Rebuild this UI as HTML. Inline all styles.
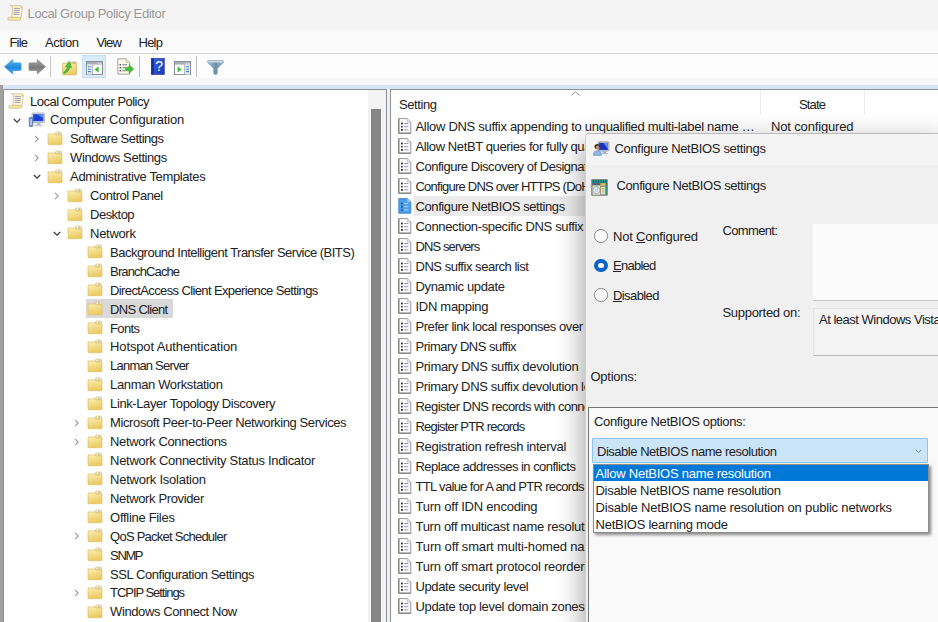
<!DOCTYPE html>
<html><head><meta charset="utf-8"><title>Local Group Policy Editor</title>
<style>
*{box-sizing:border-box}
html,body{margin:0;padding:0}
body{width:938px;height:622px;overflow:hidden;background:#fff;font-family:"Liberation Sans",sans-serif;font-size:13px;color:#222;position:relative;letter-spacing:-0.5px}
.abs{position:absolute}
.t{position:absolute;white-space:nowrap;line-height:16px;height:16px}
svg{overflow:visible}
#titlebar{left:0;top:0;width:938px;height:29px;background:#f4f4f4}
#menubar{left:0;top:29px;width:938px;height:24px;background:linear-gradient(#f6f6f6,#fbfbfb 5px)}
#menuline{left:0;top:53px;width:938px;height:1px;background:#cfcfcf}
#toolbar{left:0;top:54px;width:938px;height:24px;background:#fcfcfc}
#band1{left:0;top:78px;width:938px;height:7px;background:#f6f7f9}
#band2{left:0;top:85px;width:938px;height:4px;background:#d6e4f3}
#leftedge{left:0;top:85px;width:3px;height:537px;background:#a0a0a0}
#leftpane{left:3px;top:89px;width:384px;height:540px;background:#fff;border:1px solid #8a8f98;overflow:hidden}
#rightpane{left:390px;top:89px;width:560px;height:540px;background:#fff;border:1px solid #8a8f98;overflow:hidden}
#split{left:387px;top:89px;width:3px;height:533px;background:#f0f0f0}
.sel{background:#d9d9d9}
#dialog{left:584.5px;top:132.5px;width:360px;height:500px;background:#f0f0f0;border-top-left-radius:4px;border-left:1px solid #cfcfcf;border-top:1px solid #bcbcbc;box-shadow:0 10px 28px rgba(0,0,0,.42);overflow:hidden}
.d12{font-size:13px}
u{text-decoration-thickness:1px;text-underline-offset:1px}
.radio{width:13.5px;height:13.5px;border-radius:50%;border:1px solid #858585;background:#f9f9f9;margin-left:-0.6px !important}
.radio.on{border:4px solid #0a64c8;background:#fff}
.dd{letter-spacing:-0.18px}
#dialog > *{margin-left:-1px;margin-top:-0.5px}
#dtitle{left:1px;top:0.5px;width:360px;height:31.5px;background:#f4f4f4}

</style></head><body>
<svg width="0" height="0" style="position:absolute">
<defs>
<linearGradient id="gfold" x1="0" y1="0" x2="0.3" y2="1"><stop offset="0" stop-color="#fbeeb4"/><stop offset="1" stop-color="#eccb63"/></linearGradient>
<g id="i-folder" transform="translate(-0.9,0.6) scale(0.93,0.94)">
<path d="M9.5 1.5 h5 q1 0 1 1 v2 h-7 z" fill="#f3dc90" stroke="#d9b95a" stroke-width="0.6"/>
<rect x="10.5" y="2" width="4" height="1.6" fill="#fff"/><rect x="12" y="2.2" width="1.6" height="1.1" fill="#4a90e2"/>
<path d="M1 3.5 h7.5 l1.2 1 h5.8 q0.5 0 0.5 0.5 v9.5 q0 0.5 -0.5 0.5 h-14 q-0.5 0 -0.5 -0.5 z" fill="url(#gfold)" stroke="#dcbc5e" stroke-width="0.7"/>
</g>
<g id="i-scroll">
<path d="M3.4 0.8 H13.4 Q15.6 0.8 15.3 2.8 L14 12.8 H4.6 L5.7 3.2 Q5.9 0.8 3.4 0.8 Z" fill="#fdf6d2" stroke="#c8b67c" stroke-width="0.7"/>
<path d="M13.4 0.8 Q15.6 0.8 15.3 2.8 L14.9 4 Q13.6 3.4 13.8 2 Z" fill="#e8c66a"/>
<path d="M1.6 12.4 H12.6 Q14 12.4 13.8 13.9 Q13.6 15.2 12.4 15.2 H2 Q0.8 15.2 0.8 13.8 Q0.8 12.4 1.6 12.4 Z" fill="#f6e9a8" stroke="#c8b67c" stroke-width="0.7"/>
<path d="M7 3.4h6 M6.8 5.4h6 M6.6 7.4h6 M6.4 9.4h6" stroke="#8d92b8" stroke-width="0.9"/>
</g>
<g id="i-pc">
<rect x="4" y="1" width="12.5" height="9.5" rx="0.8" fill="#d8dde4" stroke="#9aa2ae" stroke-width="0.7"/>
<rect x="5.2" y="2.2" width="10.1" height="7" fill="#1c3fd6"/>
<path d="M9 2.2 h6.3 v4 z" fill="#6fa0f5" opacity="0.8"/>
<rect x="8.5" y="10.8" width="4" height="2" fill="#b0b6bf"/><rect x="6.5" y="12.8" width="8" height="1.4" rx="0.5" fill="#c3c8d0"/>
<rect x="1.2" y="5.5" width="3.6" height="9" rx="0.8" fill="#5f8fd6" stroke="#3a62a8" stroke-width="0.6"/>
<rect x="2.4" y="7" width="1.2" height="6" fill="#dfe9f8"/>
</g>
<g id="i-pol">
<path d="M0.8 0.6 h8.6 l3.4 3.4 v11.2 h-12z" fill="#fdfdfd" stroke="#8a8a8a" stroke-width="0.9"/>
<path d="M0.8 15.2 h12 M0.8 0.6 v14.6" fill="none" stroke="#6e6e6e" stroke-width="0.9"/>
<path d="M9.4 0.6 v3.4 h3.4" fill="#e8e8e8" stroke="#b0b0b0" stroke-width="0.6"/>
<rect x="3" y="4.6" width="1.8" height="1.8" fill="#2a2a2a"/><rect x="3" y="7.8" width="1.8" height="1.8" fill="#5a4a8a"/><rect x="3" y="11" width="1.8" height="1.8" fill="#2a2a2a"/>
<path d="M6 5.5h4.4 M6 8.7h4.4 M6 11.9h4.4" stroke="#8a90b0" stroke-width="0.9"/>
</g>
<g id="i-polsel">
<path d="M0.8 0.6 h8.6 l3.4 3.4 v11.2 h-12z" fill="#4a9de8" stroke="#3a86d0" stroke-width="0.9"/>
<path d="M9.4 0.6 v3.4 h3.4z" fill="#9ccbf5"/>
<rect x="3" y="4.6" width="1.8" height="1.8" fill="#1f5fae"/><rect x="3" y="7.8" width="1.8" height="1.8" fill="#1f5fae"/><rect x="3" y="11" width="1.8" height="1.8" fill="#1f5fae"/>
<path d="M6 5.5h4.4 M6 8.7h4.4 M6 11.9h4.4" stroke="#b9dcfa" stroke-width="0.9"/>
</g>
<g id="i-pc2">
<rect x="5" y="0.8" width="11" height="9.2" rx="0.8" fill="#c5ccd6" stroke="#8b94a2" stroke-width="0.7"/>
<rect x="6.1" y="1.9" width="8.8" height="7" fill="#1432c4"/>
<path d="M10.5 1.9 h4.4 v6 z" fill="#7fa8f5" opacity="0.75"/>
<rect x="9.6" y="10.2" width="3.6" height="1.7" fill="#a2a9b3"/><rect x="8" y="11.9" width="7" height="1.2" rx="0.5" fill="#b4bac3"/>
<circle cx="4.2" cy="5.6" r="2.7" fill="#4a3222"/><ellipse cx="4.7" cy="6.4" rx="1.7" ry="2" fill="#c98e62"/>
<path d="M0.4 14.4 q0 -4.8 4 -4.8 q4 0 4 4.8z" fill="#8db6e4" stroke="#5a88c4" stroke-width="0.5"/>
</g>
</defs></svg>
<div class="abs" id="titlebar"></div>
<div class="abs" id="menubar"></div>
<div class="abs" id="menuline"></div>
<div class="abs" id="toolbar"></div>
<div class="abs" id="band1"></div>
<div class="abs" id="band2"></div>
<div class="abs" id="leftedge"></div>
<div class="abs" id="split"></div>
<svg class="abs" style="left:6.5px;top:5px" width="17" height="16"><use href="#i-scroll"/></svg>
<span class="t" style="left:27.5px;top:5.5px;color:#999;letter-spacing:-0.349px;">Local Group Policy Editor</span>
<span class="t" style="left:9.5px;top:34.7px;letter-spacing:-0.818px;">File</span>
<span class="t" style="left:45px;top:34.7px;letter-spacing:-0.408px;">Action</span>
<span class="t" style="left:96.5px;top:34.7px;letter-spacing:-0.851px;">View</span>
<span class="t" style="left:138.5px;top:34.7px;letter-spacing:-0.75px;">Help</span>
<!-- toolbar -->
<svg class="abs" style="left:3.5px;top:59px" width="18" height="16" viewBox="0 0 18 16">
<defs><linearGradient id="gba" x1="0" y1="0" x2="0" y2="1"><stop offset="0" stop-color="#5db8f5"/><stop offset="0.55" stop-color="#1e8ae0"/><stop offset="1" stop-color="#49a9ee"/></linearGradient></defs>
<path d="M8.7 0.6 L0.5 7.7 L8.7 14.9 L8.7 11.4 L16 11.4 Q17 11.4 17 10.4 L17 4.9 Q17 3.9 16 3.9 L8.7 3.9 Z" fill="url(#gba)" stroke="#3d9be6" stroke-width="0.8" stroke-linejoin="round"/></svg>
<svg class="abs" style="left:27.5px;top:59px" width="18" height="16" viewBox="0 0 18 16">
<defs><linearGradient id="gfa" x1="0" y1="0" x2="0" y2="1"><stop offset="0" stop-color="#a8a8a8"/><stop offset="0.55" stop-color="#7a7a7a"/><stop offset="1" stop-color="#9a9a9a"/></linearGradient></defs>
<path d="M9.3 0.6 L17.5 7.7 L9.3 14.9 L9.3 11.4 L2 11.4 Q1 11.4 1 10.4 L1 4.9 Q1 3.9 2 3.9 L9.3 3.9 Z" fill="url(#gfa)" stroke="#8e8e8e" stroke-width="0.8" stroke-linejoin="round"/></svg>
<div class="abs" style="left:50px;top:56px;width:1px;height:21px;background:#c9c9c9"></div>
<svg class="abs" style="left:61.5px;top:59.5px" width="15" height="16" viewBox="0 0 15 16">
<path d="M9.6 1.9 h3.8 q0.8 0 0.8 0.8 v1.5 h-5.4z" fill="#f2dc92" stroke="#d2b258" stroke-width="0.6"/>
<rect x="11" y="2.4" width="2" height="1.1" fill="#5a98e0"/>
<rect x="0.6" y="3.2" width="13.8" height="11.6" rx="0.6" fill="url(#gfold)" stroke="#d4b45a" stroke-width="0.8"/>
<path d="M1.4 12.2 C3.6 11.2 5 9.2 5.4 7 L3.6 6.6 L7.2 1.2 L9.6 7.4 L7.8 7.2 C7.2 10.2 5.2 12.6 2.2 13.4 Z" fill="#4cc43a" stroke="#2f9a26" stroke-width="0.6" stroke-linejoin="round"/>
</svg>
<div class="abs" style="left:81.5px;top:55px;width:24.5px;height:23px;background:#d9eaf9;border:1px solid #c3def5"></div>
<svg class="abs" style="left:86px;top:61px" width="17" height="14" viewBox="0 0 17 14">
<rect x="0.5" y="0.5" width="16" height="13" fill="#fdfdfd" stroke="#8a8f98"/>
<rect x="1" y="1" width="15" height="2.6" fill="#a9adb5"/>
<rect x="11.5" y="1.4" width="1.6" height="1.6" fill="#d8dbe0"/><rect x="13.8" y="1.4" width="1.6" height="1.6" fill="#d8dbe0"/>
<rect x="1" y="3.6" width="4.8" height="9.9" fill="#e9edf3"/><rect x="5.8" y="3.6" width="0.9" height="9.9" fill="#9ea3ab"/>
<path d="M2 5.8h2.8 M2 8.2h2.8 M2 10.6h2.8" stroke="#3f7fd6" stroke-width="1.1"/>
<path d="M12.6 5.4 v6.2 l-4.2 -3.1z" fill="#3fbf36"/>
</svg>
<svg class="abs" style="left:117px;top:58px" width="17" height="17" viewBox="0 0 17 17">
<path d="M0.8 0.8 h8.2 l3.6 3.4 v12 h-11.8z" fill="#fbf8e6" stroke="#9c9c96" stroke-width="0.9"/>
<path d="M9 0.8 v3.4 h3.6" fill="#e9e6d2" stroke="#a8a8a0" stroke-width="0.6"/>
<rect x="2.6" y="6" width="1.5" height="1.4" fill="#555"/><rect x="2.6" y="9" width="1.5" height="1.4" fill="#555"/><rect x="2.6" y="12" width="1.5" height="1.4" fill="#555"/>
<path d="M5.2 6.7h5 M5.2 9.7h3 M5.2 12.7h3" stroke="#7d7d88" stroke-width="1.1"/>
<path d="M8.6 9.4 h3.6 v-2.6 l4.4 4.2 l-4.4 4.2 v-2.6 h-3.6z" fill="#3fc234" stroke="#2b9a24" stroke-width="0.6" stroke-linejoin="round"/>
</svg>
<div class="abs" style="left:139px;top:56px;width:1px;height:21px;background:#bdbdbd"></div>
<svg class="abs" style="left:151px;top:58px" width="14" height="17" viewBox="0 0 14 17">
<defs><linearGradient id="ghelp" x1="0" y1="0" x2="1" y2="1"><stop offset="0" stop-color="#3a6ae6"/><stop offset="1" stop-color="#1b36b4"/></linearGradient></defs>
<rect x="0.3" y="0.3" width="13" height="16.2" fill="url(#ghelp)" stroke="#23389c" stroke-width="0.6"/>
<rect x="0.3" y="0.3" width="2.6" height="16.2" fill="#1c2f98"/>
<text x="8.2" y="13" font-family="Liberation Sans, sans-serif" font-size="14" fill="#fff" text-anchor="middle" style="letter-spacing:0">?</text>
</svg>
<svg class="abs" style="left:174px;top:61px" width="17" height="14" viewBox="0 0 17 14">
<rect x="0.5" y="0.5" width="16" height="13" fill="#fdfdfd" stroke="#8a8f98"/>
<rect x="1" y="1" width="15" height="2.6" fill="#a9adb5"/>
<rect x="11.5" y="1.4" width="1.6" height="1.6" fill="#d8dbe0"/><rect x="13.8" y="1.4" width="1.6" height="1.6" fill="#d8dbe0"/>
<rect x="11.2" y="3.6" width="4.8" height="9.9" fill="#e9edf3"/><rect x="10.3" y="3.6" width="0.9" height="9.9" fill="#9ea3ab"/>
<path d="M12.2 5.8h2.8 M12.2 8.2h2.8 M12.2 10.6h2.8" stroke="#3f7fd6" stroke-width="1.1"/>
<path d="M3.6 5.4 v6.2 l4.2 -3.1z" fill="#3fbf36"/>
</svg>
<div class="abs" style="left:196px;top:56px;width:1px;height:21px;background:#bdbdbd"></div>
<svg class="abs" style="left:207px;top:60px" width="17" height="15" viewBox="0 0 17 15">
<defs><linearGradient id="gfun" x1="0" y1="0" x2="1" y2="0"><stop offset="0" stop-color="#a9c2d2"/><stop offset="0.5" stop-color="#6c92ad"/><stop offset="1" stop-color="#9db8ca"/></linearGradient></defs>
<path d="M0.8 0.8 H16.2 V2.6 L10.2 8.4 V13.2 Q10.2 14.4 8.5 14.4 Q6.8 14.4 6.8 13.2 V8.4 L0.8 2.6 Z" fill="url(#gfun)" stroke="#6a8da8" stroke-width="0.7" stroke-linejoin="round"/>
<rect x="1.2" y="1" width="14.6" height="1.5" fill="#c9d9e4"/>
</svg>
<div class="abs" id="leftpane">
<svg class="abs" style="left:4.00px;top:2.70px" width="17" height="16"><use href="#i-scroll"/></svg>
<span class="t" style="left:26.10px;top:3.50px;letter-spacing:-0.538px;">Local Computer Policy</span>
<svg class="abs" style="left:8.70px;top:27.62px" width="8" height="6" viewBox="0 0 8 6"><path d="M0.8 1 L4 4.2 L7.2 1" fill="none" stroke="#3a3a3a" stroke-width="1.2"/></svg>
<svg class="abs" style="left:24.00px;top:21.62px" width="17" height="16"><use href="#i-pc"/></svg>
<span class="t" style="left:46.10px;top:22.42px;letter-spacing:-0.187px;">Computer Configuration</span>
<svg class="abs" style="left:29.50px;top:45.14px" width="6" height="8" viewBox="0 0 6 8"><path d="M1 0.8 L4.2 4 L1 7.2" fill="none" stroke="#9a9a9a" stroke-width="1.1"/></svg>
<svg class="abs" style="left:44.00px;top:39.84px" width="17" height="16"><use href="#i-folder"/></svg>
<span class="t" style="left:66.10px;top:41.34px;letter-spacing:-0.499px;">Software Settings</span>
<svg class="abs" style="left:29.50px;top:64.06px" width="6" height="8" viewBox="0 0 6 8"><path d="M1 0.8 L4.2 4 L1 7.2" fill="none" stroke="#9a9a9a" stroke-width="1.1"/></svg>
<svg class="abs" style="left:44.00px;top:58.76px" width="17" height="16"><use href="#i-folder"/></svg>
<span class="t" style="left:66.10px;top:60.26px;letter-spacing:-0.415px;">Windows Settings</span>
<svg class="abs" style="left:28.70px;top:84.38px" width="8" height="6" viewBox="0 0 8 6"><path d="M0.8 1 L4 4.2 L7.2 1" fill="none" stroke="#3a3a3a" stroke-width="1.2"/></svg>
<svg class="abs" style="left:44.00px;top:77.68px" width="17" height="16"><use href="#i-folder"/></svg>
<span class="t" style="left:66.10px;top:79.18px;letter-spacing:-0.377px;">Administrative Templates</span>
<svg class="abs" style="left:49.50px;top:101.90px" width="6" height="8" viewBox="0 0 6 8"><path d="M1 0.8 L4.2 4 L1 7.2" fill="none" stroke="#9a9a9a" stroke-width="1.1"/></svg>
<svg class="abs" style="left:64.00px;top:96.60px" width="17" height="16"><use href="#i-folder"/></svg>
<span class="t" style="left:86.10px;top:98.10px;letter-spacing:-0.473px;">Control Panel</span>
<svg class="abs" style="left:64.00px;top:115.52px" width="17" height="16"><use href="#i-folder"/></svg>
<span class="t" style="left:86.10px;top:117.02px;letter-spacing:-0.534px;">Desktop</span>
<svg class="abs" style="left:48.70px;top:141.14px" width="8" height="6" viewBox="0 0 8 6"><path d="M0.8 1 L4 4.2 L7.2 1" fill="none" stroke="#3a3a3a" stroke-width="1.2"/></svg>
<svg class="abs" style="left:64.00px;top:134.44px" width="17" height="16"><use href="#i-folder"/></svg>
<span class="t" style="left:86.10px;top:135.94px;letter-spacing:-0.315px;">Network</span>
<svg class="abs" style="left:84.00px;top:153.36px" width="17" height="16"><use href="#i-folder"/></svg>
<span class="t" style="left:106.10px;top:154.86px;letter-spacing:-0.521px;">Background Intelligent Transfer Service (BITS)</span>
<svg class="abs" style="left:84.00px;top:172.28px" width="17" height="16"><use href="#i-folder"/></svg>
<span class="t" style="left:106.10px;top:173.78px;letter-spacing:-0.878px;">BranchCache</span>
<svg class="abs" style="left:84.00px;top:191.20px" width="17" height="16"><use href="#i-folder"/></svg>
<span class="t" style="left:106.10px;top:192.70px;letter-spacing:-0.625px;">DirectAccess Client Experience Settings</span>
<div class="abs sel" style="left:82px;top:209.02px;width:86.5px;height:18.9px"></div>
<svg class="abs" style="left:84.00px;top:210.12px" width="17" height="16"><use href="#i-folder"/></svg>
<span class="t" style="left:106.10px;top:211.62px;letter-spacing:-0.689px;">DNS Client</span>
<svg class="abs" style="left:84.00px;top:229.04px" width="17" height="16"><use href="#i-folder"/></svg>
<span class="t" style="left:106.10px;top:230.54px;letter-spacing:-0.679px;">Fonts</span>
<svg class="abs" style="left:84.00px;top:247.96px" width="17" height="16"><use href="#i-folder"/></svg>
<span class="t" style="left:106.10px;top:249.46px;letter-spacing:-0.138px;">Hotspot Authentication</span>
<svg class="abs" style="left:84.00px;top:266.88px" width="17" height="16"><use href="#i-folder"/></svg>
<span class="t" style="left:106.10px;top:268.38px;letter-spacing:-0.799px;">Lanman Server</span>
<svg class="abs" style="left:84.00px;top:285.80px" width="17" height="16"><use href="#i-folder"/></svg>
<span class="t" style="left:106.10px;top:287.30px;letter-spacing:-0.365px;">Lanman Workstation</span>
<svg class="abs" style="left:84.00px;top:304.72px" width="17" height="16"><use href="#i-folder"/></svg>
<span class="t" style="left:106.10px;top:306.22px;letter-spacing:-0.403px;">Link-Layer Topology Discovery</span>
<svg class="abs" style="left:69.50px;top:328.94px" width="6" height="8" viewBox="0 0 6 8"><path d="M1 0.8 L4.2 4 L1 7.2" fill="none" stroke="#9a9a9a" stroke-width="1.1"/></svg>
<svg class="abs" style="left:84.00px;top:323.64px" width="17" height="16"><use href="#i-folder"/></svg>
<span class="t" style="left:106.10px;top:325.14px;letter-spacing:-0.399px;">Microsoft Peer-to-Peer Networking Services</span>
<svg class="abs" style="left:69.50px;top:347.86px" width="6" height="8" viewBox="0 0 6 8"><path d="M1 0.8 L4.2 4 L1 7.2" fill="none" stroke="#9a9a9a" stroke-width="1.1"/></svg>
<svg class="abs" style="left:84.00px;top:342.56px" width="17" height="16"><use href="#i-folder"/></svg>
<span class="t" style="left:106.10px;top:344.06px;letter-spacing:-0.37px;">Network Connections</span>
<svg class="abs" style="left:84.00px;top:361.48px" width="17" height="16"><use href="#i-folder"/></svg>
<span class="t" style="left:106.10px;top:362.98px;letter-spacing:-0.299px;">Network Connectivity Status Indicator</span>
<svg class="abs" style="left:84.00px;top:380.40px" width="17" height="16"><use href="#i-folder"/></svg>
<span class="t" style="left:106.10px;top:381.90px;letter-spacing:-0.245px;">Network Isolation</span>
<svg class="abs" style="left:84.00px;top:399.32px" width="17" height="16"><use href="#i-folder"/></svg>
<span class="t" style="left:106.10px;top:400.82px;letter-spacing:-0.367px;">Network Provider</span>
<svg class="abs" style="left:84.00px;top:418.24px" width="17" height="16"><use href="#i-folder"/></svg>
<span class="t" style="left:106.10px;top:419.74px;letter-spacing:-0.301px;">Offline Files</span>
<svg class="abs" style="left:69.50px;top:442.46px" width="6" height="8" viewBox="0 0 6 8"><path d="M1 0.8 L4.2 4 L1 7.2" fill="none" stroke="#9a9a9a" stroke-width="1.1"/></svg>
<svg class="abs" style="left:84.00px;top:437.16px" width="17" height="16"><use href="#i-folder"/></svg>
<span class="t" style="left:106.10px;top:438.66px;letter-spacing:-0.754px;">QoS Packet Scheduler</span>
<svg class="abs" style="left:84.00px;top:456.08px" width="17" height="16"><use href="#i-folder"/></svg>
<span class="t" style="left:106.10px;top:457.58px;letter-spacing:-1.388px;">SNMP</span>
<svg class="abs" style="left:84.00px;top:475.00px" width="17" height="16"><use href="#i-folder"/></svg>
<span class="t" style="left:106.10px;top:476.50px;letter-spacing:-0.449px;">SSL Configuration Settings</span>
<svg class="abs" style="left:69.50px;top:499.22px" width="6" height="8" viewBox="0 0 6 8"><path d="M1 0.8 L4.2 4 L1 7.2" fill="none" stroke="#9a9a9a" stroke-width="1.1"/></svg>
<svg class="abs" style="left:84.00px;top:493.92px" width="17" height="16"><use href="#i-folder"/></svg>
<span class="t" style="left:106.10px;top:495.42px;letter-spacing:-1.049px;">TCPIP Settings</span>
<svg class="abs" style="left:84.00px;top:512.84px" width="17" height="16"><use href="#i-folder"/></svg>
<span class="t" style="left:106.10px;top:514.34px;letter-spacing:-0.405px;">Windows Connect Now</span>
<div class="abs" style="left:364px;top:0;width:18px;height:540px;background:#f3f3f3"></div>
<div class="abs" style="left:367px;top:19px;width:10px;height:540px;background:#868686"></div>
</div>
<div class="abs" id="rightpane">
<span class="t" style="left:8px;top:7px;letter-spacing:-0.414px;">Setting</span>
<span class="t" style="left:408px;top:7px;letter-spacing:-0.84px;">State</span>
<svg class="abs" style="left:180px;top:1px" width="9" height="5" viewBox="0 0 9 5"><path d="M0.5 4.5 L4.5 0.8 L8.5 4.5" fill="none" stroke="#9a9a9a" stroke-width="1"/></svg>
<div class="abs" style="left:369px;top:0;width:1px;height:25px;background:#eeeeee"></div>
<div class="abs" style="left:473px;top:0;width:1px;height:25px;background:#eeeeee"></div>
<svg class="abs" style="left:7px;top:28px" width="14" height="16"><use href="#i-pol"/></svg>
<span class="t" style="left:24.5px;top:28.5px;letter-spacing:-0.297px;">Allow DNS suffix appending to unqualified multi-label name …</span>
<svg class="abs" style="left:7px;top:48px" width="14" height="16"><use href="#i-pol"/></svg>
<span class="t" style="left:24.5px;top:48.5px;letter-spacing:-0.388px;">Allow NetBT queries for fully qualified domain names</span>
<svg class="abs" style="left:7px;top:68px" width="14" height="16"><use href="#i-pol"/></svg>
<span class="t" style="left:24.5px;top:68.5px;letter-spacing:-0.473px;">Configure Discovery of Designated Resolvers (DDR) protocol</span>
<svg class="abs" style="left:7px;top:88px" width="14" height="16"><use href="#i-pol"/></svg>
<span class="t" style="left:24.5px;top:88.5px;letter-spacing:-0.764px;">Configure DNS over HTTPS (DoH) name resolution</span>
<div class="abs" style="left:23px;top:106px;width:600px;height:20px;background:#ebebeb"></div>
<svg class="abs" style="left:7px;top:108px" width="14" height="16"><use href="#i-polsel"/></svg>
<span class="t" style="left:24.5px;top:108.5px;letter-spacing:-0.4px;">Configure NetBIOS settings</span>
<svg class="abs" style="left:7px;top:128px" width="14" height="16"><use href="#i-pol"/></svg>
<span class="t" style="left:24.5px;top:128.5px;letter-spacing:-0.353px;">Connection-specific DNS suffix</span>
<svg class="abs" style="left:7px;top:148px" width="14" height="16"><use href="#i-pol"/></svg>
<span class="t" style="left:24.5px;top:148.5px;letter-spacing:-0.889px;">DNS servers</span>
<svg class="abs" style="left:7px;top:168px" width="14" height="16"><use href="#i-pol"/></svg>
<span class="t" style="left:24.5px;top:168.5px;letter-spacing:-0.471px;">DNS suffix search list</span>
<svg class="abs" style="left:7px;top:188px" width="14" height="16"><use href="#i-pol"/></svg>
<span class="t" style="left:24.5px;top:188.5px;letter-spacing:-0.35px;">Dynamic update</span>
<svg class="abs" style="left:7px;top:208px" width="14" height="16"><use href="#i-pol"/></svg>
<span class="t" style="left:24.5px;top:208.5px;letter-spacing:-0.287px;">IDN mapping</span>
<svg class="abs" style="left:7px;top:228px" width="14" height="16"><use href="#i-pol"/></svg>
<span class="t" style="left:24.5px;top:228.5px;letter-spacing:-0.447px;">Prefer link local responses over DNS when received over a network</span>
<svg class="abs" style="left:7px;top:248px" width="14" height="16"><use href="#i-pol"/></svg>
<span class="t" style="left:24.5px;top:248.5px;letter-spacing:-0.498px;">Primary DNS suffix</span>
<svg class="abs" style="left:7px;top:268px" width="14" height="16"><use href="#i-pol"/></svg>
<span class="t" style="left:24.5px;top:268.5px;letter-spacing:-0.333px;">Primary DNS suffix devolution</span>
<svg class="abs" style="left:7px;top:288px" width="14" height="16"><use href="#i-pol"/></svg>
<span class="t" style="left:24.5px;top:288.5px;letter-spacing:-0.348px;">Primary DNS suffix devolution level</span>
<svg class="abs" style="left:7px;top:308px" width="14" height="16"><use href="#i-pol"/></svg>
<span class="t" style="left:24.5px;top:308.5px;letter-spacing:-0.547px;">Register DNS records with connection-specific DNS suffix</span>
<svg class="abs" style="left:7px;top:328px" width="14" height="16"><use href="#i-pol"/></svg>
<span class="t" style="left:24.5px;top:328.5px;letter-spacing:-0.799px;">Register PTR records</span>
<svg class="abs" style="left:7px;top:348px" width="14" height="16"><use href="#i-pol"/></svg>
<span class="t" style="left:24.5px;top:348.5px;letter-spacing:-0.292px;">Registration refresh interval</span>
<svg class="abs" style="left:7px;top:368px" width="14" height="16"><use href="#i-pol"/></svg>
<span class="t" style="left:24.5px;top:368.5px;letter-spacing:-0.524px;">Replace addresses in conflicts</span>
<svg class="abs" style="left:7px;top:388px" width="14" height="16"><use href="#i-pol"/></svg>
<span class="t" style="left:24.5px;top:388.5px;letter-spacing:-0.658px;">TTL value for A and PTR records</span>
<svg class="abs" style="left:7px;top:408px" width="14" height="16"><use href="#i-pol"/></svg>
<span class="t" style="left:24.5px;top:408.5px;letter-spacing:-0.218px;">Turn off IDN encoding</span>
<svg class="abs" style="left:7px;top:428px" width="14" height="16"><use href="#i-pol"/></svg>
<span class="t" style="left:24.5px;top:428.5px;letter-spacing:-0.288px;">Turn off multicast name resolution</span>
<svg class="abs" style="left:7px;top:448px" width="14" height="16"><use href="#i-pol"/></svg>
<span class="t" style="left:24.5px;top:448.5px;letter-spacing:-0.154px;">Turn off smart multi-homed name resolution</span>
<svg class="abs" style="left:7px;top:468px" width="14" height="16"><use href="#i-pol"/></svg>
<span class="t" style="left:24.5px;top:468.5px;letter-spacing:-0.216px;">Turn off smart protocol reordering</span>
<svg class="abs" style="left:7px;top:488px" width="14" height="16"><use href="#i-pol"/></svg>
<span class="t" style="left:24.5px;top:488.5px;letter-spacing:-0.374px;">Update security level</span>
<svg class="abs" style="left:7px;top:508px" width="14" height="16"><use href="#i-pol"/></svg>
<span class="t" style="left:24.5px;top:508.5px;letter-spacing:-0.333px;">Update top level domain zones</span>
<span class="t" style="left:380px;top:28.5px;letter-spacing:-0.151px;">Not configured</span>
</div>
<div class="abs" id="dialog">
<div class="abs" id="dtitle"></div>
<svg class="abs" style="left:8.3px;top:7.8px" width="17" height="16"><use href="#i-pc2"/></svg>
<span class="t d12" style="left:30px;top:8.3px;letter-spacing:-0.332px;">Configure NetBIOS settings</span>
<svg class="abs" style="left:6px;top:46px" width="17" height="17" viewBox="0 0 17 17">
<rect x="0.4" y="0.4" width="16.2" height="16.2" fill="#5c5c5c"/>
<rect x="1" y="0.8" width="15" height="3.2" fill="#2f8f8c"/>
<path d="M2.5 0.8v3 M5 0.8v3 M7.5 0.8v3 M10 0.8v3 M12.5 0.8v3 M15 0.8v3" stroke="#1d5f62" stroke-width="0.9"/>
<rect x="1" y="4" width="15" height="2.2" fill="#4e6a70"/>
<rect x="9.5" y="4.2" width="5" height="1.8" fill="#e9c23c"/>
<rect x="1.4" y="6.4" width="13.2" height="9.4" fill="#ece6cc"/>
<circle cx="5.4" cy="11.2" r="3.6" fill="#dfe6ee" stroke="#8e9aa8" stroke-width="0.7"/><circle cx="5.4" cy="11.2" r="1.1" fill="#fff" stroke="#8e9aa8" stroke-width="0.5"/>
<path d="M5.4 11.2 L8.6 9.4 A3.6 3.6 0 0 0 6.6 7.8Z" fill="#b9e08a" opacity="0.8"/>
<rect x="9.6" y="7.4" width="5" height="7.8" fill="#fbf3b8" stroke="#7a7a6a" stroke-width="0.7"/>
<path d="M10.6 9.4h3 M10.6 11.2h3 M10.6 13h3" stroke="#8a8a7a" stroke-width="0.7"/>
<rect x="14.9" y="6.4" width="1.3" height="9.6" fill="#2f8f8c"/>
</svg>
<span class="t d12" style="left:32px;top:45px;letter-spacing:-0.4px;">Configure NetBIOS settings</span>

<div class="abs radio" style="left:9.5px;top:96px"></div>
<span class="t d12" style="left:28.5px;top:95.6px;letter-spacing:-0.196px;">Not <u>C</u>onfigured</span>
<div class="abs radio on" style="left:9.5px;top:125.5px"></div>
<span class="t d12" style="left:28.5px;top:125.1px;letter-spacing:-0.736px;"><u>E</u>nabled</span>
<div class="abs radio" style="left:9.5px;top:155px"></div>
<span class="t d12" style="left:28.5px;top:154.6px;letter-spacing:-0.585px;"><u>D</u>isabled</span>

<span class="t d12" style="left:138px;top:90px;letter-spacing:-0.653px;">Comment:</span>
<div class="abs" style="left:228px;top:91px;width:140px;height:76.5px;background:#fbfbfb;border-bottom:1px solid #c2c2c2"></div>
<span class="t d12" style="left:138px;top:172px;letter-spacing:-0.307px;">Supported on:</span>
<div class="abs" style="left:228px;top:175px;width:140px;height:47.5px;background:#f3f3f3;border:1px solid #e2e2e2;border-bottom:1px solid #bcbcbc"></div>
<span class="t d12" style="left:234.5px;top:178.5px;letter-spacing:-0.493px;">At least Windows Vista</span>

<span class="t d12" style="left:6px;top:236px;letter-spacing:-0.275px;">Options:</span>
<div class="abs" style="left:3px;top:273.5px;width:380px;height:300px;background:#f9f9f9;border:1px solid #767676"></div>
<span class="t" style="left:9.5px;top:280.9px;letter-spacing:-0.341px;">Configure NetBIOS options:</span>
<div class="abs" style="left:7px;top:305px;width:336.5px;height:24.5px;background:#cce4f7;border:1px solid #90c3ee;border-radius:1px"></div>
<span class="t" style="left:12.5px;top:310.6px;letter-spacing:-0.479px;">Disable NetBIOS name resolution</span>
<svg class="abs" style="left:330.5px;top:316px" width="7" height="5" viewBox="0 0 7 5"><path d="M0.8 0.8 L3.5 3.6 L6.2 0.8" fill="none" stroke="#7d8791" stroke-width="1"/></svg>
<div class="abs" style="left:8px;top:331px;width:336px;height:69px;background:#fff;border:1px solid #8c8c8c;box-shadow:2px 2px 3px rgba(0,0,0,.45)"></div>
<div class="abs" style="left:9px;top:332px;width:334px;height:16px;background:#0078d7"></div>
<span class="t dd" style="left:11px;top:333px;color:#fff;letter-spacing:-0.235px;">Allow NetBIOS name resolution</span>
<span class="t dd" style="left:11px;top:349.9px;letter-spacing:-0.296px;">Disable NetBIOS name resolution</span>
<span class="t dd" style="left:11px;top:366.7px;letter-spacing:-0.185px;">Disable NetBIOS name resolution on public networks</span>
<span class="t dd" style="left:11px;top:383.5px;letter-spacing:-0.245px;">NetBIOS learning mode</span>
</div>
</body></html>
